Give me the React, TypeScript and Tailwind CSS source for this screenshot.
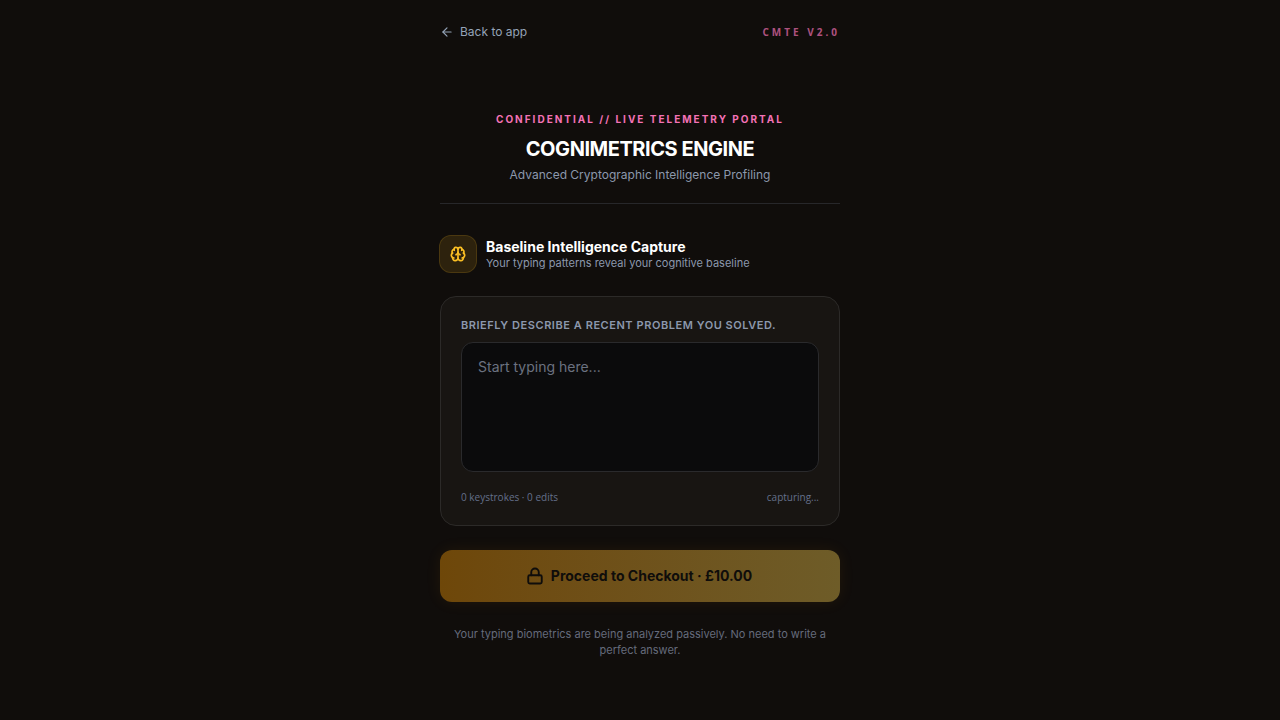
import { ArrowLeft, Brain, Lock } from "lucide-react";

export default function App() {
  return (
    <div className="min-h-screen bg-[#100d0b] font-['Inter',sans-serif] antialiased">
      <div className="mx-auto w-[400px] pt-6">
        <div className="flex h-4 items-center justify-between">
          <div className="flex items-center gap-1.5 text-xs leading-4 text-[#94a3b8]">
            <ArrowLeft className="h-[14px] w-[14px]" />
            <span>Back to app</span>
          </div>
          <span className="font-['Open_Sans',sans-serif] text-[10px] font-bold tracking-[0.3em] text-[#f472b6]/70">CMTE V2.0</span>
        </div>

        <div className="mt-[72px] border-b border-[#27272a] pb-5 text-center">
          <p className="text-[10px] font-bold leading-[15px] tracking-[0.2em] text-[#f472b6]">CONFIDENTIAL // LIVE TELEMETRY PORTAL</p>
          <h1 className="mt-2 text-xl font-bold leading-7 tracking-[-0.0225em] text-white">COGNIMETRICS ENGINE</h1>
          <p className="mt-1 text-xs leading-4 text-[#8c98ad]">Advanced Cryptographic Intelligence Profiling</p>
        </div>

        <div className="mt-[31px] -ml-px flex items-center gap-[9px]">
          <div className="flex h-[38px] w-[38px] items-center justify-center rounded-xl border border-[#fbbf24]/15 bg-[#fbbf24]/[0.12]">
            <Brain className="h-4 w-4 text-[#fbbf24]" strokeWidth={2.5} />
          </div>
          <div className="mt-[2px]">
            <h2 className="text-sm font-bold leading-4 text-white">Baseline Intelligence Capture</h2>
            <p className="text-[11px] leading-4 text-[#8c98ad]">Your typing patterns reveal your cognitive baseline</p>
          </div>
        </div>

        <div className="mt-[23px] h-[230px] rounded-2xl border border-[#2c2a28] bg-[#181512] px-5 pt-[22px]">
          <label className="block text-[11px] font-semibold leading-[13px] tracking-[0.05em] text-[#8c98ad]">BRIEFLY DESCRIBE A RECENT PROBLEM YOU SOLVED.</label>
          <div className="mt-[10px] h-[130px] rounded-xl border border-[#2a2a2c] bg-[#0b0b0c] px-4 py-[14px] text-sm leading-5 text-[#6b7280]">Start typing here...</div>
          <div className="mt-[18px] flex justify-between font-['Open_Sans',sans-serif] text-[10px] leading-[15px] text-[#64708a]">
            <span>0 keystrokes · 0 edits</span>
            <span>capturing...</span>
          </div>
        </div>

        <button className="mt-6 flex h-[52px] w-full items-center justify-center gap-[7px] rounded-xl bg-gradient-to-r from-[#6e4709] to-[#6e5c28] pr-[2px] text-sm font-bold text-[#0f0d0b] shadow-[0_0_16px_rgba(245,158,11,0.08)]">
          <Lock className="h-[18px] w-[18px]" strokeWidth={2.5} />
          Proceed to Checkout · £10.00
        </button>

        <p className="mx-auto mt-6 w-[380px] text-center text-[11px] leading-4 text-[#656b7c]">Your typing biometrics are being analyzed passively. No need to write a perfect answer.</p>
      </div>
    </div>
  );
}
